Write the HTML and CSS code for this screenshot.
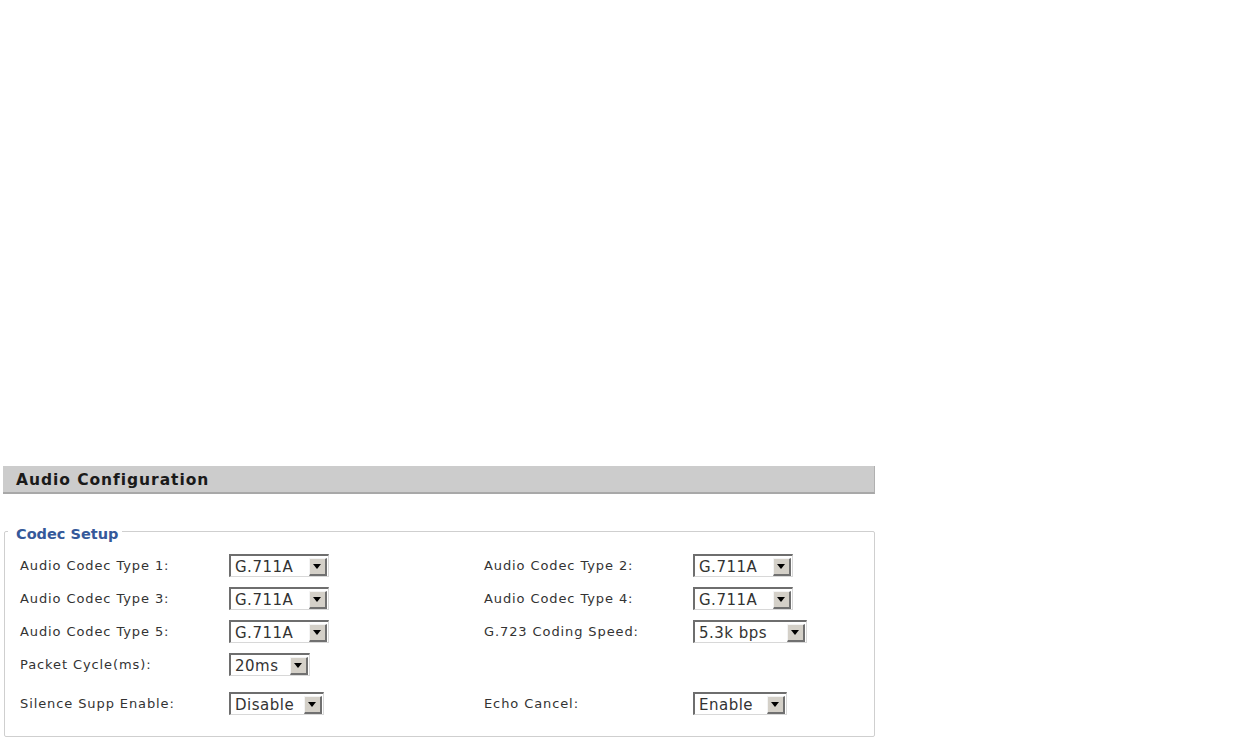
FILE: index.html
```html
<html>
  <head>
    <link rel="stylesheet" href="styles.css">
  </head>
  <body>
    <div class="page">
      <div class="title-bar">Audio Configuration</div>
      <fieldset class="group">
        <legend>Codec Setup</legend>
        <div class="grid">
          <label>Audio Codec Type 1:</label>
          <div class="cell"><span class="select w-codec"><span class="value">G.711A</span><span class="arrow"></span></span></div>
          <label>Audio Codec Type 2:</label>
          <div class="cell"><span class="select w-codec"><span class="value">G.711A</span><span class="arrow"></span></span></div>

          <label>Audio Codec Type 3:</label>
          <div class="cell"><span class="select w-codec"><span class="value">G.711A</span><span class="arrow"></span></span></div>
          <label>Audio Codec Type 4:</label>
          <div class="cell"><span class="select w-codec"><span class="value">G.711A</span><span class="arrow"></span></span></div>

          <label>Audio Codec Type 5:</label>
          <div class="cell"><span class="select w-codec"><span class="value">G.711A</span><span class="arrow"></span></span></div>
          <label>G.723 Coding Speed:</label>
          <div class="cell"><span class="select w-speed"><span class="value">5.3k bps</span><span class="arrow"></span></span></div>

          <label>Packet Cycle(ms):</label>
          <div class="cell"><span class="select w-cycle"><span class="value">20ms</span><span class="arrow"></span></span></div>
          <label></label>
          <div class="cell"></div>

          <label>Silence Supp Enable:</label>
          <div class="cell"><span class="select w-disable"><span class="value">Disable</span><span class="arrow"></span></span></div>
          <label>Echo Cancel:</label>
          <div class="cell"><span class="select w-enable"><span class="value">Enable</span><span class="arrow"></span></span></div>
        </div>
      </fieldset>
    </div>
  </body>
</html>
```

FILE: styles.css
```css
body {
  margin: 0;
  background: white;
  font-family: "DejaVu Sans", Verdana, sans-serif;
  color: #222;
}
.page {
  width: 872px;
  padding: 466px 0 0 3px;
}
.title-bar {
  height: 26px;
  line-height: 28px;
  background: #cccccc;
  border-bottom: 2px solid #a8a8a8;
  border-right: 1px solid #b0b0b0;
  padding-left: 13px;
  font-size: 15.5px;
  font-weight: bold;
  letter-spacing: 0.95px;
  color: #1a1a1a;
}
.group {
  margin: 26px 0 0 1px;
  padding: 0 0 10px 15px;
  border: 1px solid #cfcfcf;
  border-radius: 2px;
}
.group legend {
  margin-left: -12px;
  padding: 6px 4px 0 8px;
  font-size: 14.5px;
  font-weight: bold;
  color: #35599a;
}
.grid {
  display: grid;
  grid-template-columns: 209px 255px 209px auto;
  grid-template-rows: 33px 33px 33px 33px 45px;
  align-items: center;
  margin-top: 7px;
}
.grid label {
  font-size: 13px;
  letter-spacing: 0.9px;
  color: #333;
}
.select {
  display: inline-flex;
  align-items: center;
  height: 19px;
  padding: 1px 1px 0 1px;
  border-top: 2px solid #6e6e6e;
  border-left: 2px solid #6e6e6e;
  border-right: 1px solid #d8d8d8;
  border-bottom: 1px solid #d8d8d8;
  background: white;
}
.value {
  flex: 1;
  padding-left: 3px;
  font-size: 15px;
  letter-spacing: 0.5px;
  color: #333;
}
.arrow {
  width: 15px;
  height: 15px;
  margin-left: 3px;
  background: #d4d0c8;
  border-top: 1px solid #f4f4f4;
  border-left: 1px solid #f4f4f4;
  border-right: 2px solid #707070;
  border-bottom: 2px solid #707070;
  position: relative;
}
.arrow::after {
  content: "";
  position: absolute;
  left: 3px;
  top: 5px;
  border-left: 4.5px solid transparent;
  border-right: 4.5px solid transparent;
  border-top: 5px solid black;
}
.w-codec { width: 95px; }
.w-speed { width: 109px; }
.w-cycle { width: 76px; }
.w-disable { width: 90px; }
.w-enable { width: 89px; }
```
